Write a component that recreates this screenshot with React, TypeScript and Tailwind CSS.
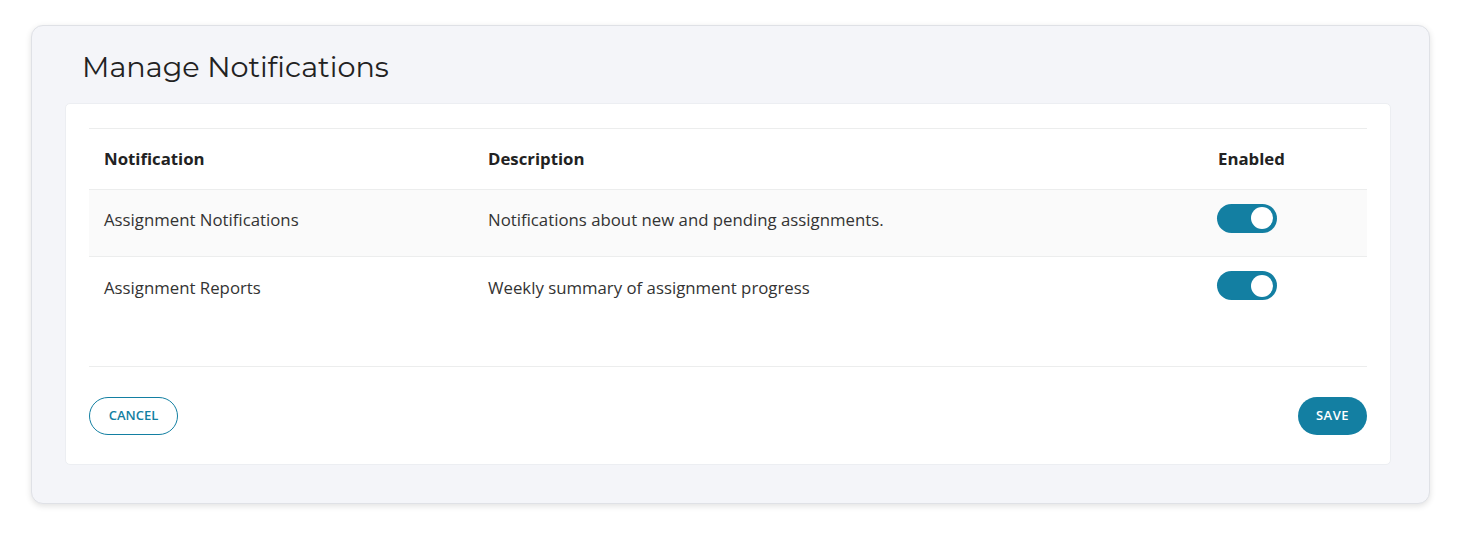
import { useState } from "react";

type Row = { id: string; name: string; description: string };

const ROWS: Row[] = [
  { id: "assignments", name: "Assignment Notifications", description: "Notifications about new and pending assignments." },
  { id: "reports", name: "Assignment Reports", description: "Weekly summary of assignment progress" },
];

function Toggle({ on, onChange }: { on: boolean; onChange: () => void }) {
  return (
    <button
      type="button"
      onClick={onChange}
      className={`mb-[4px] flex h-[29px] w-[60px] items-center rounded-full px-[4px] ${on ? "justify-end bg-[#137fa2]" : "justify-start bg-gray-300"}`}
    >
      <span className="h-[22px] w-[22px] rounded-full bg-white" />
    </button>
  );
}

export default function App() {
  const [enabled, setEnabled] = useState<Record<string, boolean>>({ assignments: true, reports: true });

  return (
    <div className="min-h-screen bg-white pl-[31px] pr-[29px] pt-[25px] font-['Open_Sans',sans-serif]">
      <div className="rounded-[12px] border border-[#dfe1e6] bg-[#f4f5f9] pl-[33px] pr-[38px] pb-[38px] shadow-[0_2px_6px_rgba(0,0,0,0.12)]">
        <h1 className="pl-[17px] pt-[23px] pb-[18px] font-['Montserrat','Noto_Sans',sans-serif] text-[28.7px] font-normal leading-[36px] text-[#222]">
          Manage Notifications
        </h1>
        <div className="rounded-[5px] border border-[#eceef2] bg-white px-[23px] pt-[24px] pb-[29px]">
          <div className="h-[239px] border-y border-[#eceded]">
            <div className="grid h-[61px] grid-cols-[384px_730px_1fr] items-center border-b border-[#eceded] text-[16.8px] font-bold text-[#222]">
              <div className="pl-[15px]">Notification</div>
              <div className="pl-[15px]">Description</div>
              <div className="pl-[15px]">Enabled</div>
            </div>
            {ROWS.map((row, i) => (
              <div
                key={row.id}
                className={`grid h-[67px] grid-cols-[384px_730px_1fr] items-center pb-[6px] text-[16.8px] text-[#333] ${i === 0 ? "border-b border-[#eceded] bg-[#fafafa]" : ""}`}
              >
                <div className="pl-[15px]">{row.name}</div>
                <div className="pl-[15px]">{row.description}</div>
                <div className="pl-[14px]">
                  <Toggle
                    on={enabled[row.id]}
                    onChange={() => setEnabled((s) => ({ ...s, [row.id]: !s[row.id] }))}
                  />
                </div>
              </div>
            ))}
          </div>
          <div className="mt-[30px] flex items-center justify-between">
            <button className="h-[38px] w-[89px] rounded-full border-[1.5px] border-[#137fa2] text-[13px] font-semibold tracking-normal text-[#137fa2]">
              CANCEL
            </button>
            <button className="h-[38px] w-[69px] rounded-full bg-[#137fa2] text-[13px] font-semibold tracking-[0.5px] text-white">
              SAVE
            </button>
          </div>
        </div>
      </div>
    </div>
  );
}
